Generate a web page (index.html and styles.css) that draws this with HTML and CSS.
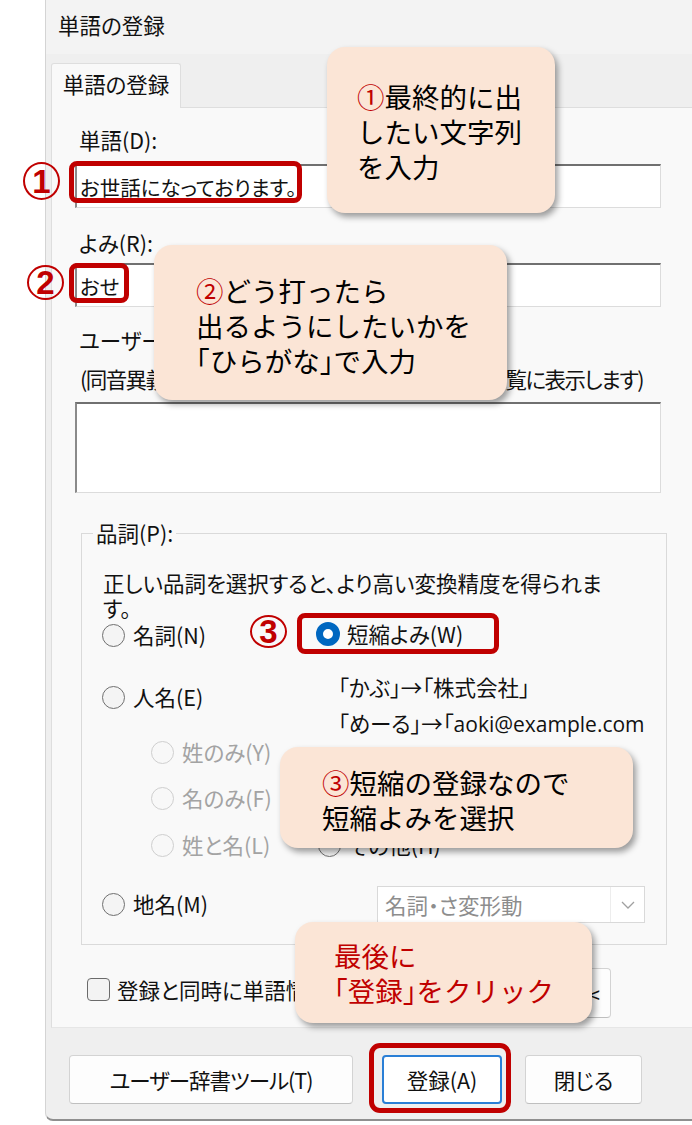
FILE: index.html
```html
<!DOCTYPE html>
<html lang="ja">
<head>
<meta charset="utf-8">
<title>単語の登録</title>
<link rel="stylesheet" href="styles.css">
</head>
<body>
<div class="page">
  <div class="dialog">
    <div class="titlebar">単語の登録</div>
    <div class="tabstrip"><div class="tab">単語の登録</div></div>
    <div class="panel">
      <div class="label">単語(D):</div>
      <div class="field f-word">お世話になっております。</div>
      <div class="label l-yomi">よみ(R):</div>
      <div class="field f-yomi">おせ</div>
      <div class="label l-comment">ユーザーコメント(C):</div>
      <div class="hint">(同音異義語の区別を容易にするため、変換候補一覧に表示します)</div>
      <div class="field f-area"></div>
      <fieldset class="group">
        <legend>品詞(P):</legend>
        <p class="desc">正しい品詞を選択すると、より高い変換精度を得られま<br>す。</p>
        <div class="cols">
          <div class="col-left">
            <div class="radio r-noun"><span class="dot"></span><span>名詞(N)</span></div>
            <div class="radio r-person"><span class="dot"></span><span>人名(E)</span></div>
            <div class="radio sub disabled r-sei"><span class="dot"></span><span>姓のみ(Y)</span></div>
            <div class="radio sub disabled r-mei"><span class="dot"></span><span>名のみ(F)</span></div>
            <div class="radio sub disabled r-both"><span class="dot"></span><span>姓と名(L)</span></div>
            <div class="radio r-place"><span class="dot"></span><span>地名(M)</span></div>
          </div>
          <div class="col-right">
            <div class="radio checked r-short"><span class="dot"></span><span>短縮よみ(W)</span></div>
            <div class="example ex1">「かぶ」→「株式会社」</div>
            <div class="example ex2">「めーる」→「<span class="lat">aoki@example.com</span></div>
            <div class="radio r-other"><span class="dot"></span><span>その他(H)</span></div>
            <div class="select">
              <span class="select-text">名詞・さ変形動</span>
              <span class="select-sep"></span>
              <span class="select-arrow"><svg width="14" height="8" viewBox="0 0 14 8"><polyline points="1,1 7,7 13,1" fill="none" stroke="#a0a0a0" stroke-width="1.3"/></svg></span>
            </div>
          </div>
        </div>
      </fieldset>
      <div class="checkrow">
        <span class="checkbox"></span>
        <span class="check-label">登録と同時に単語情報を送信する(S)</span>
        <button class="btn btn-more">詳細 &lt;&lt;</button>
      </div>
    </div>
    <div class="buttons">
      <button class="btn b-tool">ユーザー辞書ツール(T)</button>
      <button class="btn b-reg">登録(A)</button>
      <button class="btn b-close">閉じる</button>
    </div>
  </div>

  <div class="hl h1"></div>
  <div class="hl h2"></div>
  <div class="hl h3"></div>
  <div class="hl h4"></div>

  <div class="mark m1">1</div>
  <div class="mark m2">2</div>
  <div class="mark m3">3</div>

  <div class="callout c1"><p><span class="red">①</span>最終的に出<br>したい文字列<br>を入力</p></div>
  <div class="callout c2"><p><span class="red">②</span>どう打ったら<br>出るようにしたいかを<br><span class="hw">「</span>ひらがな<span class="hw">」</span>で入力</p></div>
  <div class="callout c3"><p><span class="red">③</span>短縮の登録なので<br>短縮よみを選択</p></div>
  <div class="callout c4"><p>最後に<br><span class="hw">「</span>登録<span class="hw">」</span>をクリック</p></div>
</div>
</body>
</html>
```

FILE: styles.css
```css
* { box-sizing: border-box; }
html, body { margin: 0; padding: 0; }
body {
  width: 692px;
  height: 1125px;
  overflow: hidden;
  background: #ffffff;
  font-family: "Noto Sans CJK JP", sans-serif;
  color: #111111;
}
.page {
  position: relative;
  width: 692px;
  height: 1125px;
  overflow: hidden;
}

/* dialog window */
.dialog {
  margin-left: 45px;
  width: 700px;
  height: 1121px;
  background: #efefef;
  border-left: 1px solid #d4d4d4;
  border-bottom: 2px solid #8f8f8f;
  border-bottom-left-radius: 8px;
  font-size: 21.5px;
  font-feature-settings: "palt";
  display: flex;
  flex-direction: column;
}
.titlebar {
  height: 54px;
  flex: none;
  background: #f3f3f3;
  padding-left: 12px;
  line-height: 50px;
}
.tabstrip {
  height: 53px;
  flex: none;
  display: flex;
  align-items: flex-end;
  padding-left: 5px;
}
.tab {
  position: relative;
  width: 130px;
  height: 45px;
  margin-bottom: -1px;
  background: #f9f9f9;
  border: 1px solid #dedede;
  border-bottom: none;
  border-radius: 3px 3px 0 0;
  display: flex;
  align-items: center;
  justify-content: center;
  padding-bottom: 4px;
  line-height: 28px;
}
.panel {
  flex: none;
  margin-left: 5px;
  height: 921px;
  background: #f9f9f9;
  border-top: 1px solid #dedede;
  border-left: 1px solid #dedede;
  border-bottom: 1px solid #e6e6e6;
  padding: 18px 0 0 23px;
}
.label {
  height: 28px;
  line-height: 28px;
  margin-left: 4px;
  white-space: nowrap;
}
.field {
  width: 586px;
  background: #ffffff;
  border: 1px solid #dcdcdc;
  border-top: 2px solid #707070;
  border-left: 2px solid #8a8a8a;
  padding-left: 3px;
  display: flex;
  align-items: center;
  white-space: nowrap;
  font-size: 20.5px;
}
.f-word { height: 44px; margin-top: 10px; }
.l-yomi { margin-top: 21px; }
.f-yomi { height: 44px; margin-top: 6px; }
.l-comment { margin-top: 19px; }
.hint {
  margin-top: 11px;
  margin-left: 5px;
  height: 28px;
  line-height: 28px;
  white-space: nowrap;
  letter-spacing: -1.55px;
}
.f-area { height: 91px; margin-top: 9px; }

/* part of speech group */
.group {
  margin: 26px 0 0 6px;
  padding: 0;
  width: 586px;
  height: 426px;
  border: 1px solid #dadada;
  min-inline-size: 0;
}
.group legend {
  margin-left: 11px;
  padding: 0 3px;
  height: 28px;
  line-height: 28px;
}
.desc {
  margin: 23px 0 0 0;
  padding-left: 21px;
  line-height: 25px;
  white-space: nowrap;
}
.cols {
  display: flex;
  padding-left: 20px;
}
.col-left {
  width: 214px;
  display: flex;
  flex-direction: column;
  align-items: flex-start;
}
.col-right {
  display: flex;
  flex-direction: column;
  align-items: flex-start;
}
.radio {
  display: flex;
  align-items: center;
  gap: 8px;
  height: 26px;
  line-height: 26px;
  white-space: nowrap;
}
.dot {
  flex: none;
  width: 23px;
  height: 23px;
  border-radius: 50%;
  border: 1.6px solid #707070;
  background: #f4f4f4;
}
.radio.disabled { color: #a3a3a3; }
.radio.disabled .dot { border-color: #cfcfcf; background: #f8f8f8; }
.radio.checked .dot {
  width: 24px;
  height: 24px;
  border: 7px solid #0067c0;
  background: #ffffff;
}
.r-noun { margin-top: 2px; }
.r-person { margin-top: 36px; }
.sub { margin-left: 49px; }
.r-sei { margin-top: 29px; }
.r-mei { margin-top: 20px; }
.r-both { margin-top: 21px; }
.r-place { margin-top: 33px; }
.r-short { margin-top: 1px; gap: 7px; }
.example {
  height: 26px;
  line-height: 26px;
  margin-left: 22px;
  white-space: nowrap;
}
.ex1 { margin-top: 27px; }
.ex2 { margin-top: 10px; }
.lat {
  font-family: "Open Sans", "Noto Sans CJK JP", sans-serif;
  font-size: 21px;
}
.r-other { margin-top: 96px; margin-left: 2px; }
.select {
  margin-top: 28px;
  margin-left: 61px;
  width: 268px;
  height: 37px;
  background: #ffffff;
  border: 1px solid #d9d9d9;
  display: flex;
  align-items: stretch;
  color: #8d8d8d;
}
.select-text {
  flex: 1;
  padding-left: 7px;
  display: flex;
  align-items: center;
  white-space: nowrap;
}
.select-sep { width: 1px; background: #ededed; }
.select-arrow {
  width: 33px;
  display: flex;
  align-items: center;
  justify-content: center;
}

/* checkbox row */
.checkrow {
  margin-top: 23px;
  margin-left: 12px;
  width: 524px;
  height: 50px;
  display: flex;
  align-items: flex-start;
}
.checkbox {
  flex: none;
  width: 23px;
  height: 23px;
  margin-top: 10px;
  border: 1.5px solid #6b6b6b;
  border-radius: 4px;
  background: #f3f3f3;
}
.check-label {
  margin-left: 7px;
  margin-top: 8px;
  line-height: 28px;
  white-space: nowrap;
}

/* buttons */
.btn {
  font-family: inherit;
  font-size: 21.5px;
  font-feature-settings: "palt";
  color: #111111;
  background: #fdfdfd;
  border: 1px solid #d3d3d3;
  border-bottom-color: #bfbfbf;
  border-radius: 4px;
  padding: 0;
  white-space: nowrap;
}
.btn-more {
  margin-left: auto;
  width: 120px;
  height: 50px;
  text-align: right;
  padding-right: 10px;
}
.buttons {
  display: flex;
  padding: 27px 0 0 23px;
}
.b-tool { width: 284px; height: 49px; margin-right: 29px; letter-spacing: -1px; }
.b-reg { width: 120px; height: 49px; margin-right: 23px; border: 2px solid #2a7fd6; background: #ffffff; }
.b-close { width: 117px; height: 49px; }

/* annotations */
.hl {
  position: absolute;
  border: 5px solid #c00000;
  border-radius: 8px;
}
.h1 { left: 69px; top: 161px; width: 233px; height: 42px; }
.h2 { left: 69px; top: 263px; width: 60px; height: 40px; }
.h3 { left: 297px; top: 613px; width: 202px; height: 41px; }
.h4 { left: 369px; top: 1043px; width: 142px; height: 70px; border-radius: 11px; }

.mark {
  position: absolute;
  border: 2px solid #c00000;
  border-radius: 50%;
  color: #c00000;
  font-family: "Liberation Sans", sans-serif;
  font-weight: 700;
  font-size: 33px;
  line-height: 1;
  display: flex;
  align-items: center;
  justify-content: center;
}
.m1 { left: 23px; top: 162px; width: 37px; height: 38px; }
.m2 { left: 27px; top: 265px; width: 37px; height: 35px; }
.m3 { left: 250px; top: 615px; width: 37px; height: 33px; }

.callout {
  position: absolute;
  background: #fbe5d6;
  border-radius: 18px;
  box-shadow: 3px 4px 6px rgba(0, 0, 0, 0.38);
  font-family: "Noto Sans CJK JP", sans-serif;
  font-size: 27.5px;
  line-height: 35px;
  color: #000000;
  display: flex;
  flex-direction: column;
  justify-content: center;
  white-space: nowrap;
}
.callout p { margin: 0; }
.hw { font-feature-settings: "halt"; }
.red { color: #c00000; }
.c1 { left: 327px; top: 47px; width: 228px; height: 166px; padding: 2px 0 0 30px; }
.c2 { left: 154px; top: 245px; width: 353px; height: 155px; padding: 5px 0 0 42px; }
.c3 { left: 280px; top: 747px; width: 353px; height: 101px; padding: 4px 0 0 42px; }
.c4 { left: 295px; top: 922px; width: 297px; height: 101px; padding: 0 0 0 39px; color: #c00000; }
```
